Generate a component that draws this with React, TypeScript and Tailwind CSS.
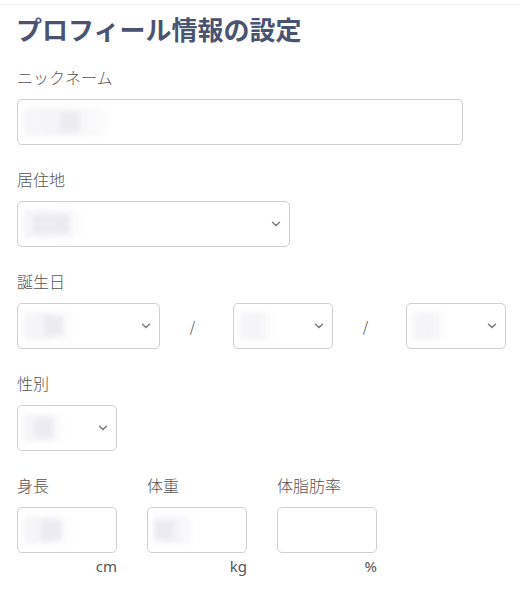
import { ReactNode } from 'react';

const font = { fontFamily: '"Noto Sans CJK JP", "Noto Sans", sans-serif' };

function Chevron() {
  return (
    <svg width="10" height="6" viewBox="0 0 10 6" className="shrink-0">
      <path d="M1.5 1.2 L5 4.6 L8.5 1.2" fill="none" stroke="#7a7a7a" strokeWidth="1.4" strokeLinecap="round" />
    </svg>
  );
}

// blurred, redacted values inside the fields
function Smudge({ w, dark, darkW, offset }: { w: number; dark?: boolean; darkW?: number; offset?: number }) {
  return (
    <div className="flex h-[28px] items-center blur-[2px]" style={{ width: w }}>
      <div className="flex h-full w-full items-center bg-gradient-to-r from-[#f7f7fa] via-[#f4f4f7] to-transparent">
        {dark && (
          <div className="h-[18px] bg-[#ebebf1]" style={{ width: darkW ?? 18, marginLeft: offset ?? 30 }} />
        )}
      </div>
    </div>
  );
}

function Field({ width, select, children }: { width: number; select?: boolean; children?: ReactNode }) {
  return (
    <div
      className="flex h-[46px] shrink-0 items-center justify-between rounded-[5px] border border-[#cfcfcf] bg-white pl-[5px] pr-[8px]"
      style={{ width }}
    >
      <div className="flex items-center">{children}</div>
      {select && <Chevron />}
    </div>
  );
}

function Label({ children }: { children: ReactNode }) {
  return <div className="mb-[10px] text-base leading-6 font-light text-[#555]">{children}</div>;
}

function Measure({ label, unit, children }: { label: string; unit: string; children?: ReactNode }) {
  return (
    <div className="w-[100px]">
      <Label>{label}</Label>
      <Field width={100}>{children}</Field>
      <div className="mt-[3px] text-right text-[15px] leading-5 text-[#555]" style={{ fontFamily: '"Noto Sans", sans-serif' }}>
        {unit}
      </div>
    </div>
  );
}

export default function App() {
  return (
    <div className="min-h-[597px] bg-white pt-1" style={font}>
      <div className="border-t border-[#eeeeee]" />
      <div className="pl-[17px]">
        <h1 className="mt-[8px] mb-[20px] text-[26px] leading-8 font-bold text-[#4b5372] -ml-[1px]">
          プロフィール情報の設定
        </h1>

        <section className="mb-[22px]">
          <Label>ニックネーム</Label>
          <Field width={446}>
            <Smudge w={92} dark darkW={18} offset={38} />
          </Field>
        </section>

        <section className="mb-[22px]">
          <Label>居住地</Label>
          <Field width={273} select>
            <Smudge w={62} dark darkW={36} offset={10} />
          </Field>
        </section>

        <section className="mb-[22px]">
          <Label>誕生日</Label>
          <div className="flex items-center">
            <Field width={143} select>
              <Smudge w={52} dark darkW={18} offset={22} />
            </Field>
            <span className="w-[73px] shrink-0 pr-[8px] text-center text-sm text-[#666]">/</span>
            <Field width={100} select>
              <Smudge w={36} />
            </Field>
            <span className="w-[73px] shrink-0 pr-[8px] text-center text-sm text-[#666]">/</span>
            <Field width={100} select>
              <Smudge w={36} />
            </Field>
          </div>
        </section>

        <section className="mb-[22px]">
          <Label>性別</Label>
          <Field width={100} select>
            <Smudge w={44} dark darkW={18} offset={12} />
          </Field>
        </section>

        <section className="flex gap-[30px]">
          <Measure label="身長" unit="cm">
            <Smudge w={50} dark darkW={20} offset={18} />
          </Measure>
          <Measure label="体重" unit="kg">
            <Smudge w={44} dark darkW={18} offset={2} />
          </Measure>
          <Measure label="体脂肪率" unit="%" />
        </section>
      </div>
    </div>
  );
}
